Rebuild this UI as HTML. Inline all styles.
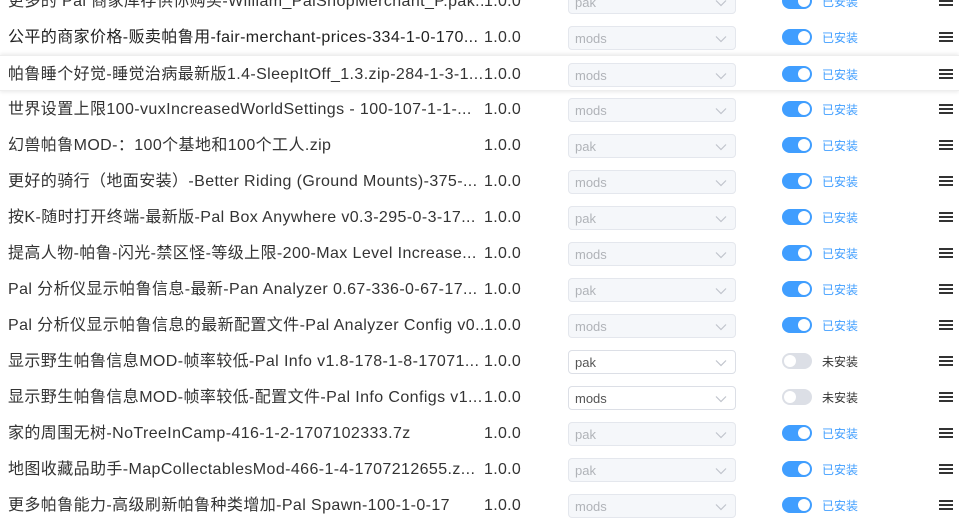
<!DOCTYPE html>
<html><head><meta charset="utf-8"><style>
*{margin:0;padding:0;box-sizing:border-box}
body{width:959px;height:498px;overflow:hidden;background:#fff;font-family:"Liberation Sans","Microsoft YaHei","Noto Sans CJK SC",sans-serif;position:relative}
.r{position:absolute;left:0;width:959px;height:36px}
.n{position:absolute;left:8px;top:8px;width:476px;font-size:16px;line-height:22px;color:#333;white-space:nowrap;overflow:hidden;letter-spacing:0.4px}
.v{position:absolute;left:484px;top:8px;font-size:16px;line-height:22px;color:#333;letter-spacing:0.3px}
.s{position:absolute;left:568px;top:7px;width:168px;height:24px;border:1px solid #dcdfe6;border-radius:4px;background:#fff;font-size:13px;line-height:23px;padding-left:6px;color:#555}
.s.d{background:#f5f7fa;border-color:#e4e7ed;color:#b0b3b8}
.s svg{position:absolute;right:8px;top:8px}
.t{position:absolute;left:782px;top:10px;width:30px;height:16px;border-radius:8px;background:#409eff}
.t::after{content:"";position:absolute;top:2px;left:16px;width:12px;height:12px;border-radius:50%;background:#fff}
.t.o{background:#dcdfe6}.t.o::after{left:2px}
.l{position:absolute;left:822px;top:11px;font-size:12px;line-height:16px;color:#409eff}
.l.o{color:#333}
.h{position:absolute;left:939px;top:13px;width:14px;height:10px;border-top:2px solid #333;border-bottom:2px solid #333}
.h::after{content:"";position:absolute;left:0;right:0;top:2px;height:2px;background:#333}
.hl{box-shadow:0 -2px 3px rgba(0,0,0,.06),0 2px 3px rgba(0,0,0,.06);border-top:1px solid #eee;border-bottom:1px solid #eee}
</style></head><body>
<div id="c"></div>
<script>
var rows=[
["更多的 Pal 商家库存供你购买-William_PalShopMerchant_P.pak...","pak",1],
["公平的商家价格-贩卖帕鲁用-fair-merchant-prices-334-1-0-170...","mods",1],
["帕鲁睡个好觉-睡觉治病最新版1.4-SleepItOff_1.3.zip-284-1-3-1...","mods",1],
["世界设置上限100-vuxIncreasedWorldSettings - 100-107-1-1-...","mods",1],
["幻兽帕鲁MOD-：100个基地和100个工人.zip","pak",1],
["更好的骑行（地面安装）-Better Riding (Ground Mounts)-375-...","mods",1],
["按K-随时打开终端-最新版-Pal Box Anywhere v0.3-295-0-3-17...","pak",1],
["提高人物-帕鲁-闪光-禁区怪-等级上限-200-Max Level Increase...","mods",1],
["Pal 分析仪显示帕鲁信息-最新-Pan Analyzer 0.67-336-0-67-17...","pak",1],
["Pal 分析仪显示帕鲁信息的最新配置文件-Pal Analyzer Config v0...","mods",1],
["显示野生帕鲁信息MOD-帧率较低-Pal Info v1.8-178-1-8-17071...","pak",0],
["显示野生帕鲁信息MOD-帧率较低-配置文件-Pal Info Configs v1...","mods",0],
["家的周围无树-NoTreeInCamp-416-1-2-1707102333.7z","pak",1],
["地图收藏品助手-MapCollectablesMod-466-1-4-1707212655.z...","pak",1],
["更多帕鲁能力-高级刷新帕鲁种类增加-Pal Spawn-100-1-0-17","mods",1]];
var h="";
rows.forEach(function(r,i){
var top=1+36*i-18;
h+='<div class="r'+(i==2?' hl':'')+'" style="top:'+top+'px"><div class="n"'+(i==1?' style="color:#222"':'')+'>'+r[0]+'</div><div class="v">1.0.0</div>'+
'<div class="s'+(r[2]?' d':'')+'">'+r[1]+'<svg width="12" height="8" viewBox="0 0 12 8"><path d="M1 1.5l5 5 5-5" fill="none" stroke="#c0c4cc" stroke-width="1.2"/></svg></div>'+
'<div class="t'+(r[2]?'':' o')+'"></div><div class="l'+(r[2]?'':' o')+'">'+(r[2]?'已安装':'未安装')+'</div><div class="h"></div></div>';
});
document.getElementById("c").innerHTML=h;
</script>
</body></html>
